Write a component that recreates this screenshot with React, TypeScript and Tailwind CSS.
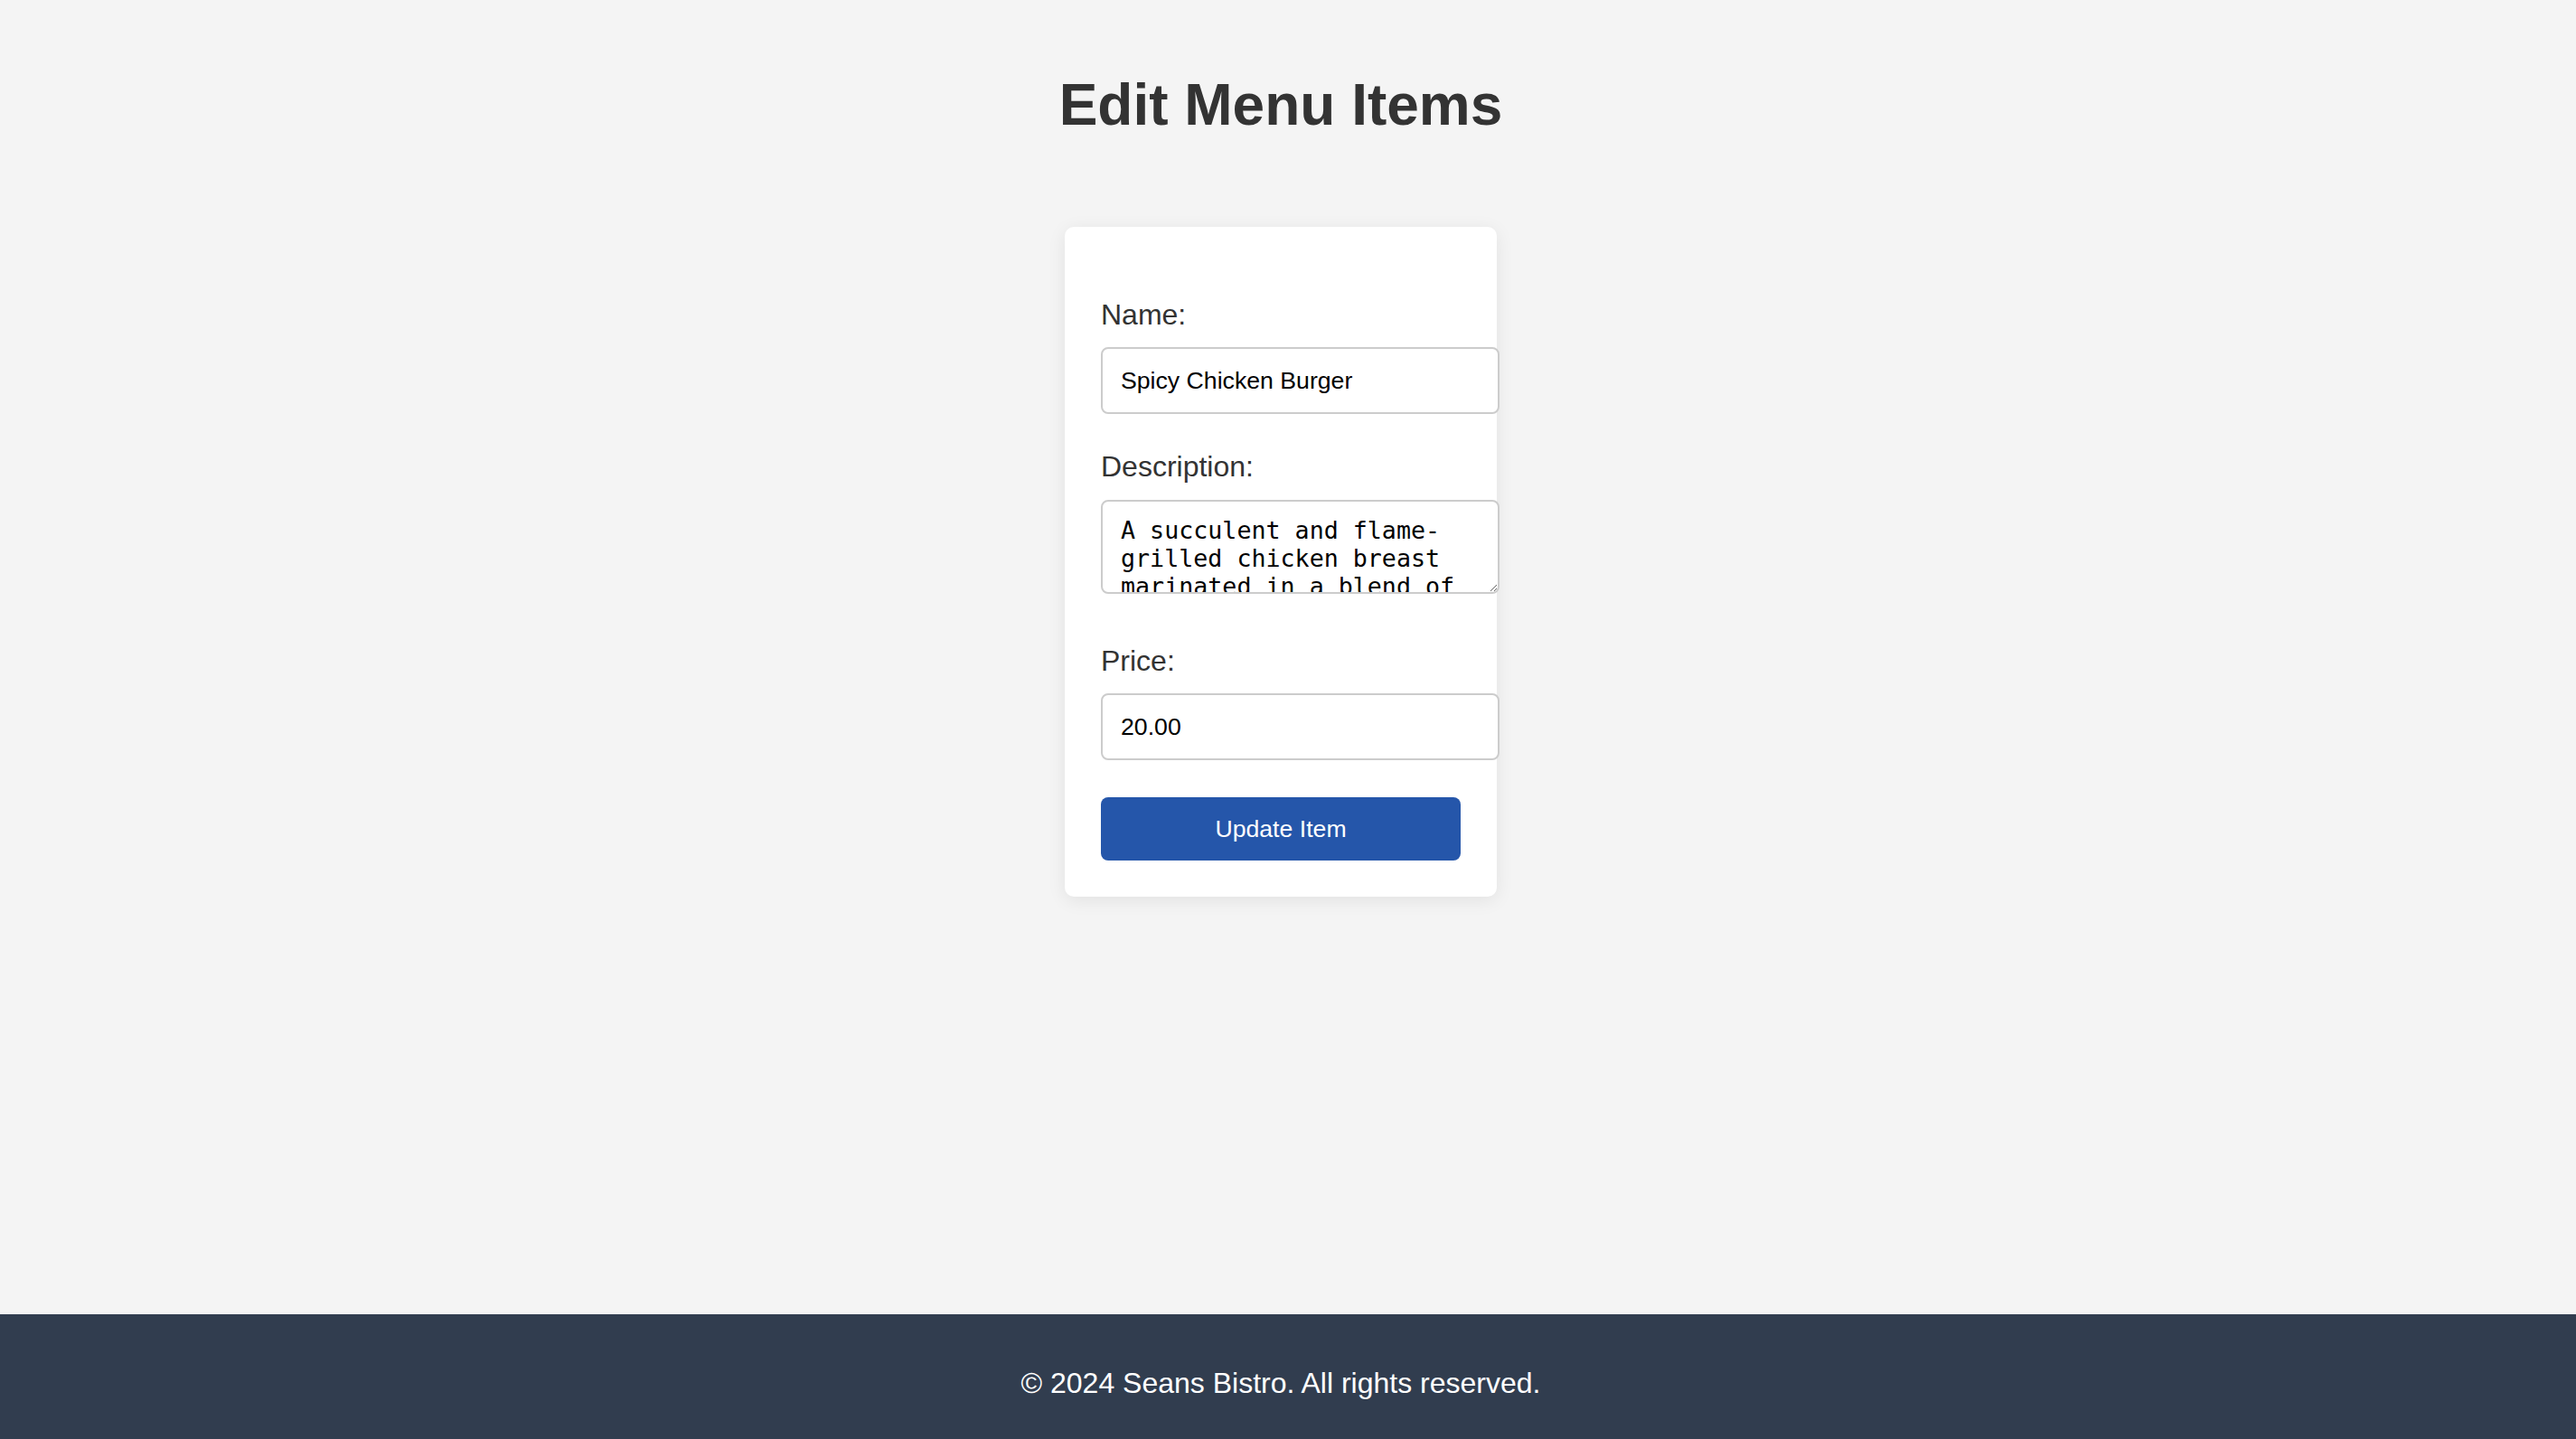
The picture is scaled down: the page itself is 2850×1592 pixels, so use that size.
import React, { useState } from 'react';

const DESCRIPTION =
  'A succulent and flame-grilled chicken breast marinated in a blend of spicy seasonings, topped with crisp lettuce, tomato and zesty chipotle mayo on a toasted brioche bun.';

export default function App() {
  const [name, setName] = useState('Spicy Chicken Burger');
  const [description, setDescription] = useState(DESCRIPTION);
  const [price, setPrice] = useState('20.00');

  const labelClass = "block text-[32px] leading-[37px] text-[#333] font-['Liberation_Sans',Arial,sans-serif]";
  const inputClass =
    "block w-[441px] h-[74px] px-[20px] border-2 border-[#ccc] rounded-[8px] bg-white text-black text-[26.67px] font-['Liberation_Sans',Arial,sans-serif] outline-none";

  return (
    <div className="min-h-screen flex flex-col bg-[#f4f4f4] font-['Liberation_Sans',Arial,sans-serif]">
      <main className="flex-1 flex flex-col items-center pt-[79px] pr-[16px]">
        <h1 className="text-[64px] leading-[74px] font-bold text-[#333]">Edit Menu Items</h1>

        {/* Edit form card */}
        <form
          className="mt-[98px] w-[478px] bg-white rounded-[10px] shadow-[0_4px_20px_rgba(0,0,0,0.08)] pt-[79px] pb-[40px] px-[40px] flex flex-col"
          onSubmit={(e) => e.preventDefault()}
        >
          <label className={labelClass}>Name:</label>
          <input
            className={`${inputClass} mt-[17px]`}
            value={name}
            onChange={(e) => setName(e.target.value)}
          />

          <label className={`${labelClass} mt-[40px]`}>Description:</label>
          <textarea
            className="block mt-[18px] w-[441px] h-[104px] px-[20px] pt-[16px] pb-[20px] border-2 border-[#ccc] rounded-[8px] bg-white text-black text-[26.67px] leading-[31px] font-['DejaVu_Sans_Mono',monospace] overflow-hidden outline-none"
            value={description}
            onChange={(e) => setDescription(e.target.value)}
          />

          <label className={`${labelClass} mt-[56px]`}>Price:</label>
          <input
            className={`${inputClass} mt-[17px] h-[74px]`}
            value={price}
            onChange={(e) => setPrice(e.target.value)}
          />

          <button
            type="submit"
            className="mt-[41px] w-[398px] h-[70px] rounded-[8px] bg-[#2556aa] text-white text-[26.67px] font-['Liberation_Sans',Arial,sans-serif]"
          >
            Update Item
          </button>
        </form>
      </main>

      <footer className="h-[138px] bg-[#313d4f] pt-[58px] pr-[16px] text-center">
        <p className="text-[32px] leading-[37px] text-white">© 2024 Seans Bistro. All rights reserved.</p>
      </footer>
    </div>
  );
}
